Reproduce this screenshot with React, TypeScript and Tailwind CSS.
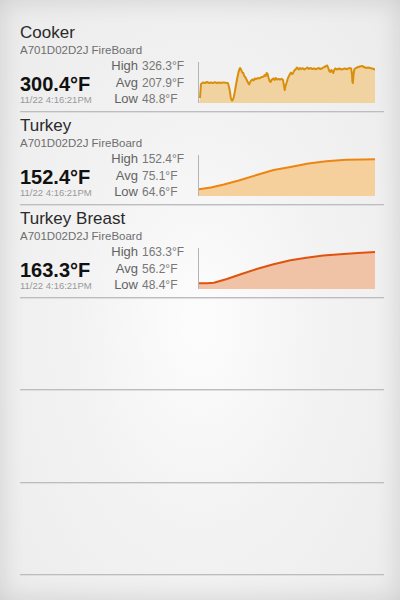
import React from 'react';

type Probe = {
  name: string;
  temp: string;
  high: string;
  avg: string;
  low: string;
  line: string;
  fill: string;
  points: string;
};

const cooker =
  '1,36 2,22 4,20.5 6,21 8,20 10,21 12,20.5 14,21 16,20.3 18,21 20,20.5 22,21 24,20.4 27,20.8 29,21 30,24 31,29 32,36 33,38.5 34,38 35,35 36,30 37,24 38.5,16 40,9 41.3,6 42.5,8 43.5,10.5 44.5,11 45.5,14 46.5,15 47.5,17 48.5,19 49.5,21 50.5,22.5 51.5,20 52.5,18.5 53.7,17.5 55,18.5 56,16.5 57.5,17 59,16 60.5,16.5 62,15.5 63.5,15 65,14.5 66,13 67,14 68,11 69,12 70,16 71,19 72,20 73,18 74,17 75,16.5 76,18 77,16 78.5,17.5 80,17 81.5,17.5 83,16.8 84.5,18 85.5,24 86.2,28 87,24 88,21 89.5,16 90.5,14 91.5,12 92.5,10.5 93.5,12 94.5,11.5 95.5,9 96.5,8 97.5,7 98.5,5.5 99.5,6.5 100.5,7.5 101.5,6 103,7 104.5,6.2 106,7.5 107.5,6.5 109,5.5 110.5,7 112,6 114,7 116,6.5 118,7.2 120,6 122,7 124,6.2 126,5 128,4 129,3.5 130,6 131,9 132,10 133,8 134,9 135,11 136,8 137,6.5 139,7.5 141,6.5 143,7.5 145,7 147,6.5 149,7.2 151,6 153,6.5 153.8,12 154.3,20 154.8,21 155.5,12 156.3,7 158,6 160,5 162,4.5 164,4 166,5 168,6 170,5.5 172,6 174,6.5 176,7 177,8';

const probes: Probe[] = [
  { name: 'Cooker', temp: '300.4°F', high: '326.3°F', avg: '207.9°F', low: '48.8°F', line: '#d98f0c', fill: '#f0d3a0', points: cooker },
  {
    name: 'Turkey', temp: '152.4°F', high: '152.4°F', avg: '75.1°F', low: '64.6°F', line: '#ee8512', fill: '#f5cf9c',
    points: '0,34.3 12,32.5 25,29.5 40,25.5 58,20 75,15 92,12 110,8.5 128,6.2 148,4.8 165,4.4 177,4.2',
  },
  {
    name: 'Turkey Breast', temp: '163.3°F', high: '163.3°F', avg: '56.2°F', low: '48.4°F', line: '#e0530f', fill: '#f1c3a6',
    points: '0,35.3 8,35.2 15,34.7 28,31 42,26.3 58,21 75,16.3 92,12.3 108,9.7 125,7.6 142,6.3 160,5 177,4',
  },
];

const ProbeRow: React.FC<{ p: Probe }> = ({ p }) => (
  <div className="h-[93px] border-b border-[#bcbcc1] shadow-[0_1px_0_#dedede] flex flex-col pt-[4px]">
    <div className="text-[17px] leading-[20px] text-[#2a2a2a]">{p.name}</div>
    <div className="text-[11.5px] leading-[13px] text-[#6e6e6e] mt-[1px]">A701D02D2J FireBoard</div>
    <div className="flex mt-[1px]">
      <div className="w-[88px] flex flex-col pt-[15px]">
        <div className="text-[20px] leading-[22px] font-bold text-[#111]">{p.temp}</div>
        <div className="text-[9.5px] leading-[10px] text-[#999]">11/22 4:16:21PM</div>
      </div>
      <div className="w-[30px] flex flex-col items-end text-[13px] leading-[16.5px] text-[#636363]">
        <span>High</span>
        <span>Avg</span>
        <span>Low</span>
      </div>
      <div className="w-[52px] ml-[4px] flex flex-col text-[12px] leading-[16.5px] text-[#777]">
        <span>{p.high}</span>
        <span>{p.avg}</span>
        <span>{p.low}</span>
      </div>
      <div className="ml-[4px] mt-[4px] w-[177px] h-[41px] border-l border-[#b4b4b4]">
        <svg width="176" height="41" viewBox="0 0 177 41" preserveAspectRatio="none">
          <polygon points={`${p.points} 177,41 0,41`} fill={p.fill} />
          <polyline points={p.points} fill="none" stroke={p.line} strokeWidth="2" strokeLinejoin="round" />
        </svg>
      </div>
    </div>
  </div>
);

export default function App() {
  return (
    <div
      className="w-[400px] h-[600px] overflow-hidden bg-[radial-gradient(ellipse_at_50%_54%,#fdfdfd_0%,#f3f3f3_42%,#ebebeb_100%)] shadow-[inset_0_0_26px_rgba(0,0,0,0.13)] pl-[20px] pr-[16px] pt-[19px]"
      style={{ fontFamily: '"Liberation Sans", Arial, sans-serif' }}
    >
      {probes.map((p) => (
        <ProbeRow key={p.name} p={p} />
      ))}
      <div className="h-[92px] border-b border-[#bcbcc1] shadow-[0_1px_0_#dedede]" />
      <div className="h-[93px] border-b border-[#bcbcc1] shadow-[0_1px_0_#dedede]" />
      <div className="h-[92px] border-b border-[#bcbcc1] shadow-[0_1px_0_#dedede]" />
    </div>
  );
}
